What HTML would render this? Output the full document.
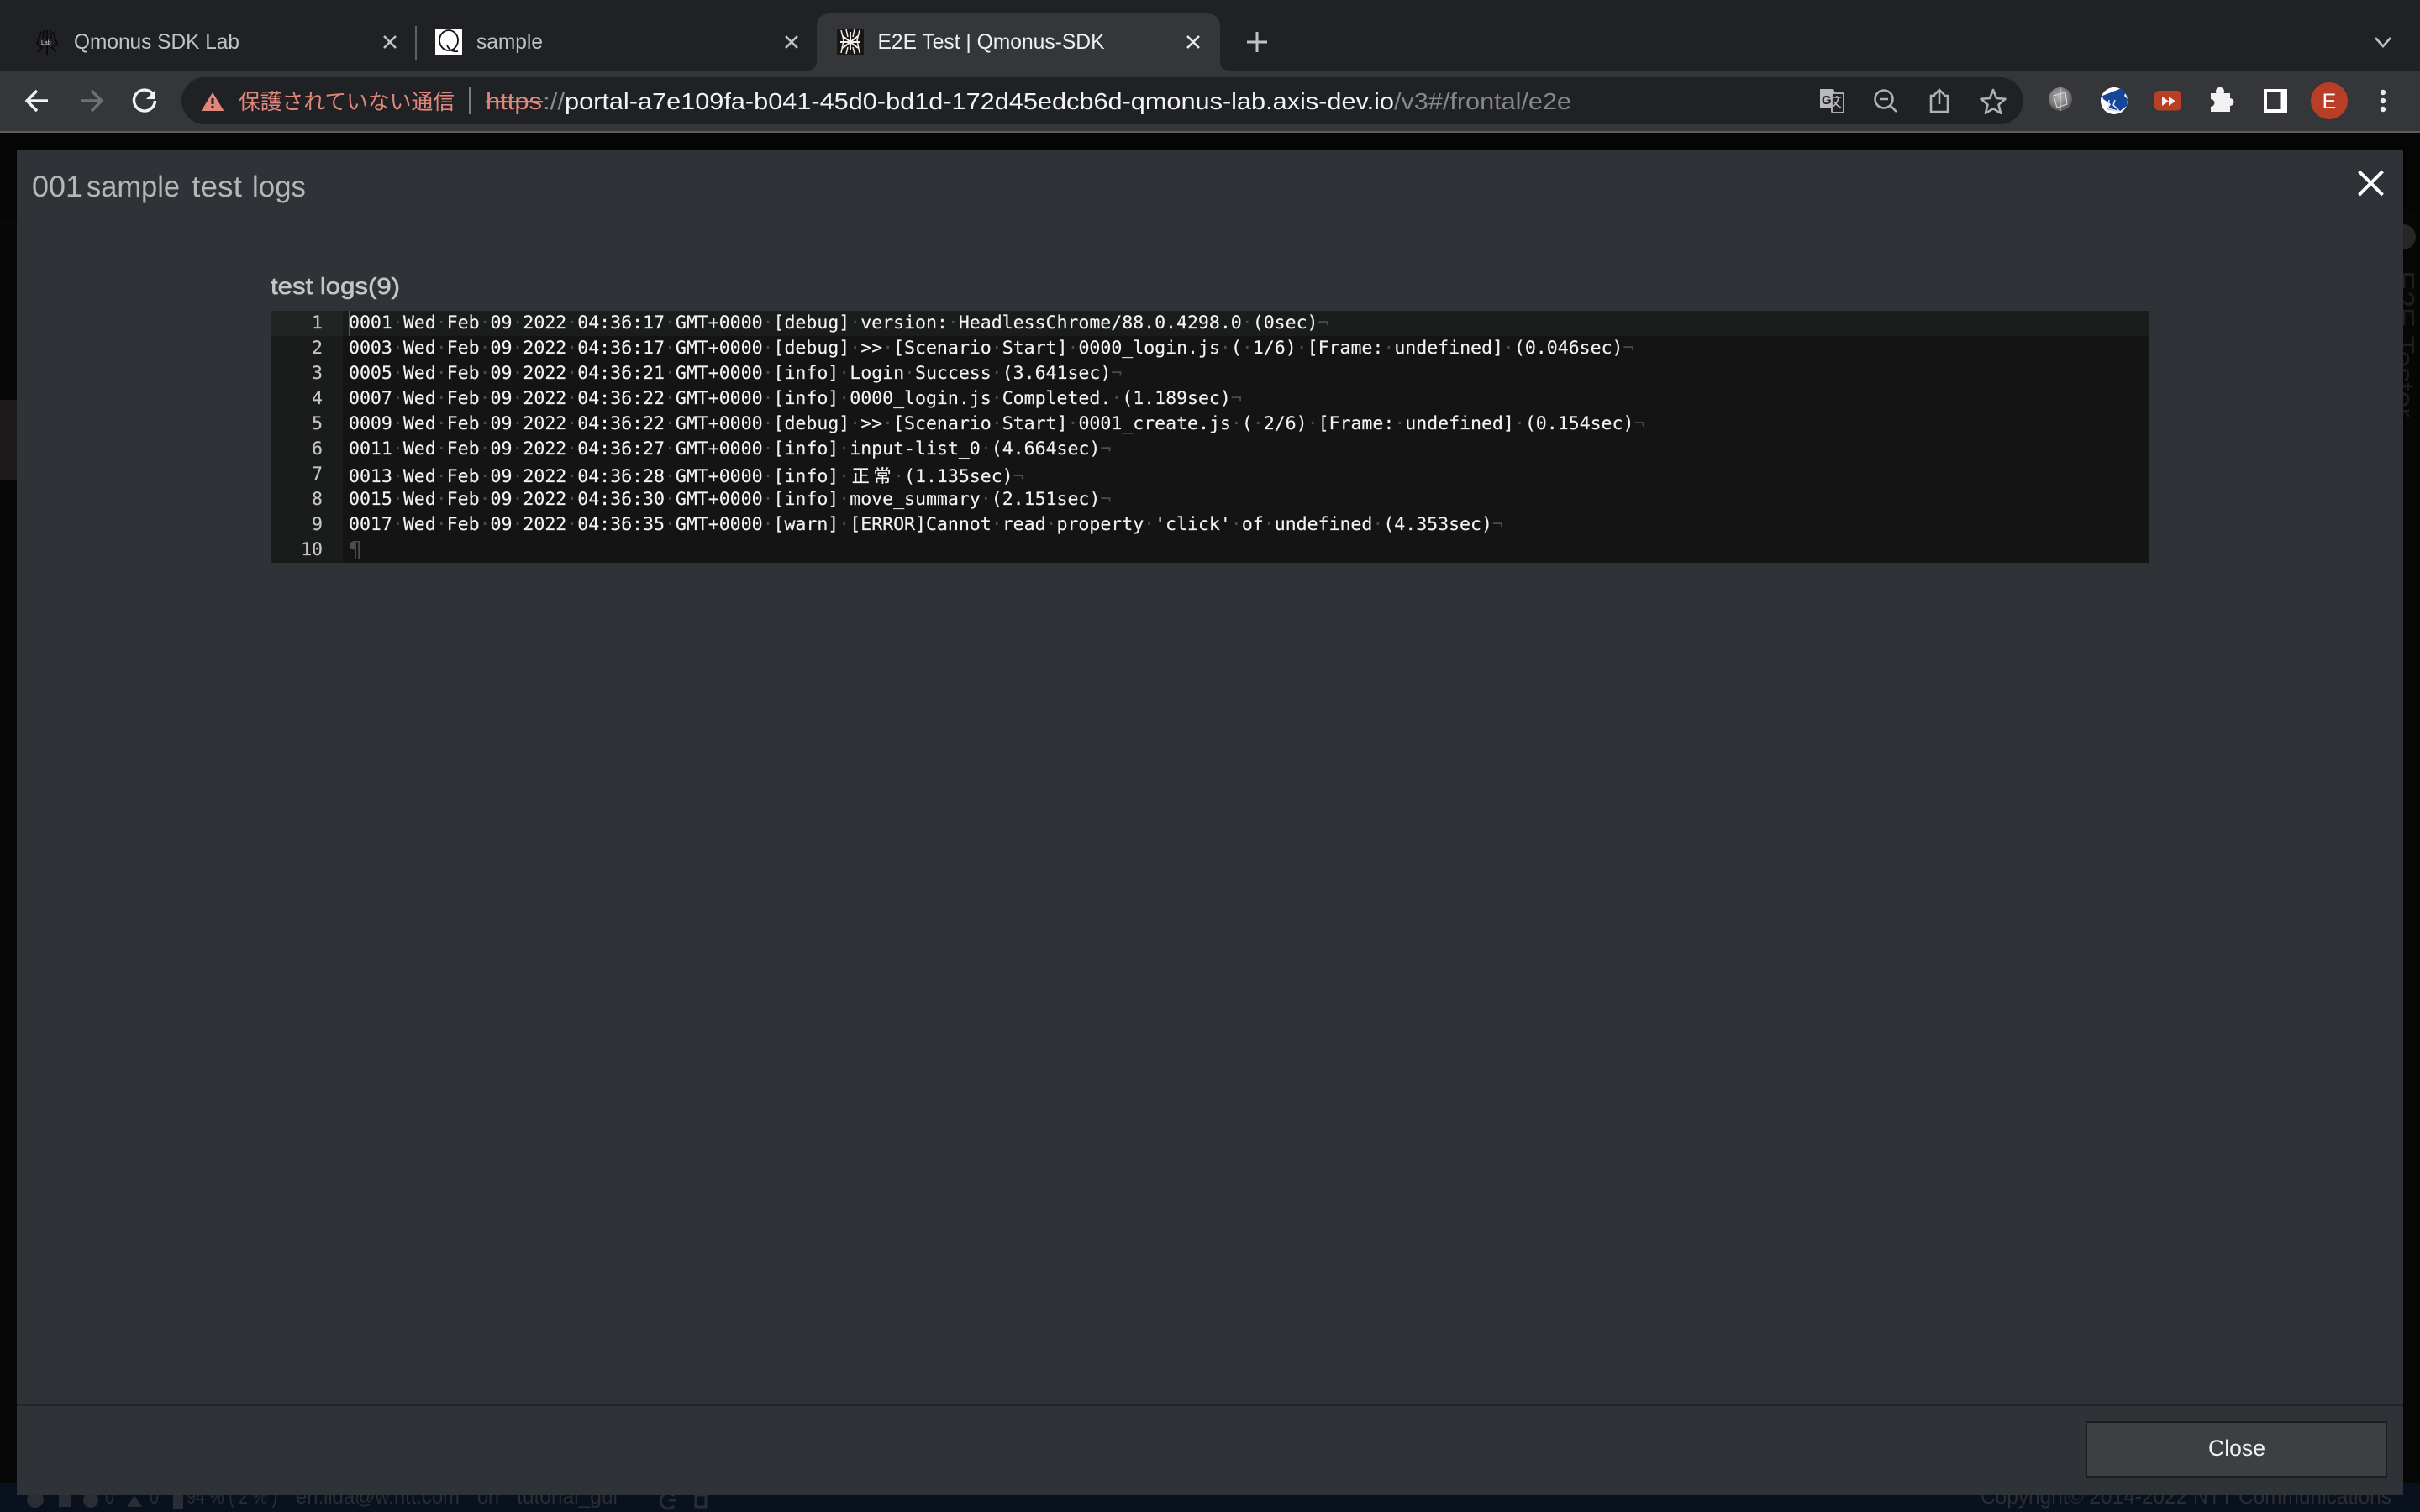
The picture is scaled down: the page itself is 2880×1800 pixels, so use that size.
<!DOCTYPE html>
<html lang="ja">
<head>
<meta charset="utf-8">
<title>E2E Test | Qmonus-SDK</title>
<style>
html,body{margin:0;padding:0;width:2880px;height:1800px;overflow:hidden;background:#050505}
#root{position:relative;width:2880px;height:1800px;overflow:hidden}
svg{position:absolute;left:0;top:0}
text{font-family:"Liberation Sans","Noto Sans CJK JP",sans-serif}
.gut{position:absolute;left:322px;top:370px;width:86px;height:300px;background:#1a1c1c}
.gutA{position:absolute;left:322px;top:370px;width:86px;height:30px;background:#222424}
.ed{position:absolute;left:408px;top:370px;width:2150px;height:300px;background:#141414}
.act{position:absolute;left:408px;top:370px;width:2150px;height:30px;background:#1b1d1d}
.cur{position:absolute;left:415px;top:370px;width:2px;height:30px;background:#5c5e5e}
.l,.n{position:absolute;font:21.6px/30px "DejaVu Sans Mono","Liberation Mono","Noto Sans CJK JP",monospace;white-space:pre;height:30px;color:#f2f2f2;letter-spacing:-0.042px;-webkit-text-stroke:0.15px #f2f2f2}
.l{left:415px}
.n{left:322px;width:62px;text-align:right;color:#c6c6c6;-webkit-text-stroke:0.15px #c6c6c6}
.l i{font-style:normal;color:#4c4d4d;-webkit-text-stroke:0}
.l b{font-weight:normal;display:inline-block;width:25.92px;text-align:center;font-family:"Noto Sans CJK JP",sans-serif;font-size:21px;line-height:30px}
</style>
</head>
<body>
<div id="root">
<svg width="2880" height="1800" viewBox="0 0 2880 1800" xmlns="http://www.w3.org/2000/svg">
  <!-- page behind modal -->
  <rect x="0" y="158" width="2880" height="1607" fill="#050505"/>
  <rect x="0" y="260" width="20" height="1505" fill="#080808"/>
  <rect x="0" y="476" width="20" height="95" fill="#1c1a1a"/>
  <rect x="2860" y="250" width="20" height="1515" fill="#070707"/>
  <circle cx="2860" cy="282" r="15" fill="#262626"/>
  <text transform="translate(2848 322) rotate(90)" font-size="36" fill="#1e1e1e">E2E Tester</text>
  <rect x="0" y="1765" width="2880" height="35" fill="#0a111e"/>
  <g fill="#2a2d33" font-size="25">
    <text x="222" y="1790" textLength="108" lengthAdjust="spacingAndGlyphs">94 % ( 2 % )</text>
    <text x="125" y="1790" textLength="11" lengthAdjust="spacingAndGlyphs">0</text>
    <text x="178" y="1790" textLength="11" lengthAdjust="spacingAndGlyphs">0</text>
    <text x="352" y="1790" textLength="195" lengthAdjust="spacingAndGlyphs">eri.iida@w.ntt.com</text>
    <text x="568" y="1790" textLength="26" lengthAdjust="spacingAndGlyphs">on</text>
    <text x="615" y="1790" textLength="120" lengthAdjust="spacingAndGlyphs">tutorial_gui</text>
    <text x="2357" y="1790" font-size="26" textLength="489" lengthAdjust="spacingAndGlyphs">Copyright© 2014-2022 NTT Communications</text>
    <circle cx="42" cy="1785" r="10"/><rect x="70" y="1780" width="15" height="14"/>
    <circle cx="108" cy="1786" r="9"/><path d="M160 1780l9 14h-18z"/><rect x="206" y="1780" width="12" height="16"/>
    <path d="M802 1781a9 9 0 1 0 0 12M804 1786h-8" fill="none" stroke="#2a2d33" stroke-width="3"/><rect x="828" y="1780" width="12" height="14" fill="none" stroke="#2a2d33" stroke-width="3"/>
  </g>

  <!-- tab strip -->
  <rect x="0" y="0" width="2880" height="84" fill="#202124"/>
  <rect x="0" y="84" width="2880" height="72" fill="#35363a"/>
  <rect x="0" y="156" width="2880" height="2" fill="#5b5c5f"/>

  <path d="M960 84c8 0 12-4 12-12V32c0-10 6-16 16-16h448c10 0 16 6 16 16v40c0 8 4 12 12 12z" fill="#35363a"/>

  <!-- tab 1 -->
  <g stroke="#0c0c0c" stroke-width="2" fill="none"><path d="M56 36v30M49 38l-5 14 7 5M63 38l5 14-7 5M45 62l6-6M67 62l-6-6M52 36l-1 10M60 36l1 10"/></g>
  <text x="49" y="53" font-size="7" fill="#ddd" font-family="Liberation Serif">Lab</text>
  <text x="88" y="58" font-size="25" fill="#c0c2c5" textLength="197" lengthAdjust="spacingAndGlyphs">Qmonus SDK Lab</text>
  <path d="M457 43l14 14M471 43l-14 14" stroke="#bfc1c4" stroke-width="2.6"/>
  <rect x="494" y="31" width="2" height="40" fill="#5f6368"/>
  <!-- tab 2 -->
  <rect x="518" y="34" width="32" height="32" fill="#fff"/>
  <ellipse cx="534" cy="48" rx="11" ry="12" fill="none" stroke="#111" stroke-width="1.800"/>
  <path d="M532 54c3 6 7 8 13 7" fill="none" stroke="#111" stroke-width="1.800"/>
  <text x="567" y="58" font-size="25" fill="#c0c2c5" textLength="79" lengthAdjust="spacingAndGlyphs">sample</text>
  <path d="M935 43l14 14M949 43l-14 14" stroke="#bfc1c4" stroke-width="2.6"/>
  <!-- tab 3 -->
  <rect x="996" y="34" width="32" height="32" fill="#1b1514"/>
  <g stroke="#eee" stroke-width="2" fill="none"><path d="M1003 43l18 14M1021 43l-18 14M1000 50h24M1012 38v22"/><path d="M1001 36l3 12-3 15M1023 36l-3 12 3 15M1007 35l2 9M1017 35l-2 9M1007 64l2-8M1017 64l-2-8" stroke-width="1.500"/></g>
  <text x="1044.5" y="58" font-size="25" fill="#eef0f2" textLength="270" lengthAdjust="spacingAndGlyphs">E2E Test | Qmonus-SDK</text>
  <path d="M1413 43l14 14M1427 43l-14 14" stroke="#e8eaed" stroke-width="2.6"/>
  <path d="M1496 38v24M1484 50h24" stroke="#c0c2c5" stroke-width="3"/>
  <path d="M2827 45l9 10 9-10" fill="none" stroke="#bfc1c4" stroke-width="2.6"/>

  <!-- toolbar nav -->
  <path d="M57 120H33M44 108L32 120L44 132" fill="none" stroke="#f1f2f3" stroke-width="3.4"/>
  <path d="M96 120H120M109 108L121 120L109 132" fill="none" stroke="#707174" stroke-width="3.4"/>
  <path d="M182 112A12.5 12.5 0 1 0 184.500 120" fill="none" stroke="#f1f2f3" stroke-width="3.4"/>
  <path d="M185 107V118H174z" fill="#f1f2f3"/>

  <!-- omnibox -->
  <rect x="216" y="92" width="2192" height="56" rx="28" fill="#202124"/>
  <path d="M253 110l13.500 22h-27z" fill="#e0877c"/>
  <rect x="251.500" y="117" width="3" height="7" fill="#202124"/><rect x="251.500" y="126" width="3" height="3" fill="#202124"/>
  <text x="284" y="130" font-size="25.600" fill="#e0877c" textLength="257" lengthAdjust="spacingAndGlyphs">保護されていない通信</text>
  <rect x="558" y="104" width="2" height="32" fill="#7b7c7f"/>
  <text x="578" y="130" font-size="28" fill="#e0877c" textLength="67" lengthAdjust="spacingAndGlyphs">https</text>
  <rect x="578" y="120" width="68" height="2.200" fill="#e0877c"/>
  <text x="646" y="130" font-size="28" fill="#8a8c8f" textLength="26" lengthAdjust="spacingAndGlyphs">://</text>
  <text x="672" y="130" font-size="28" fill="#f2f3f4" textLength="987" lengthAdjust="spacingAndGlyphs">portal-a7e109fa-b041-45d0-bd1d-172d45edcb6d-qmonus-lab.axis-dev.io</text>
  <text x="1659" y="130" font-size="28" fill="#85878a" textLength="211" lengthAdjust="spacingAndGlyphs">/v3#/frontal/e2e</text>

  <!-- omnibox right icons -->
  <path d="M2166 106h16l2 5v18h-18z" fill="#b9babc"/>
  <rect x="2180" y="111" width="14" height="23" rx="1.500" fill="#202124" stroke="#b9babc" stroke-width="1.800"/>
  <text x="2168" y="124" font-size="15" font-weight="bold" fill="#202124">G</text>
  <path d="M2181 116h10M2186 114v2M2188 116c-1 6-4 9-7 11M2183 121c2 3 5 6 8 7" fill="none" stroke="#b9babc" stroke-width="1.600"/>
  <circle cx="2242" cy="118" r="10.500" fill="none" stroke="#b0b1b3" stroke-width="2.600"/>
  <path d="M2237 118h10M2249 125l8 8" stroke="#b0b1b3" stroke-width="2.600" fill="none"/>
  <path d="M2303 114h-5v19h20v-19h-5M2308 124v-16M2302 113l6-6 6 6" fill="none" stroke="#b0b1b3" stroke-width="2.600"/>
  <path d="M2372 107l4 10 10.500.8-8 6.800 2.600 10.200-9.100-5.600-9.100 5.600 2.600-10.200-8-6.800 10.500-.8z" fill="none" stroke="#b0b1b3" stroke-width="2.600" stroke-linejoin="round"/>

  <!-- extensions -->
  <defs>
    <radialGradient id="gl" cx="45%" cy="40%" r="60%"><stop offset="0" stop-color="#b8b8b8"/><stop offset="0.6" stop-color="#808080"/><stop offset="1" stop-color="#555557"/></radialGradient>
  </defs>
  <circle cx="2452" cy="118" r="14" fill="url(#gl)"/>
  <path d="M2444 114l14-4 2 14-12 4zM2452 104v28" fill="none" stroke="#ddd" stroke-width="1"/>
  <circle cx="2516" cy="120" r="16" fill="#fff"/>
  <path d="M2502 114l23-9 5 5-2 4 4 4-1 8-9 7-14-3 4-6-9-6z" fill="#17459b"/>
  <path d="M2510 119l-1 10 14 4-8-8 2-6" fill="none" stroke="#dfe6f2" stroke-width="1.500"/>
  <rect x="2564" y="108" width="32" height="23.500" rx="5" fill="#b83e24"/>
  <path d="M2573 115l8 5.500-8 5.500zM2581 115l8 5.500-8 5.500z" fill="#f6f1ee"/>
  <path d="M2631 111h6.500a5 5 0 1 1 9 0h7.500v6a4.500 4.500 0 1 1 0 9v7h-23v-6a4.500 4.500 0 0 0 0-9z" fill="#f1f1f1"/>
  <rect x="2694" y="106" width="28" height="28" fill="#fff"/>
  <rect x="2698" y="110" width="15.500" height="20" fill="#35363a"/>
  <circle cx="2772" cy="120" r="22" fill="#b83e26"/>
  <text x="2772" y="129" font-size="25" fill="#fff" text-anchor="middle">E</text>
  <circle cx="2836" cy="110" r="3.200" fill="#e8eaed"/><circle cx="2836" cy="120" r="3.200" fill="#e8eaed"/><circle cx="2836" cy="130" r="3.200" fill="#e8eaed"/>

  <!-- modal -->
  <rect x="20" y="178" width="2840" height="1602" fill="#2f3236"/>
  <g font-size="35" fill="#b4b6b8">
    <text x="38" y="234" textLength="60" lengthAdjust="spacingAndGlyphs">001</text>
    <text x="103" y="234" textLength="111" lengthAdjust="spacingAndGlyphs">sample</text>
    <text x="228" y="234" textLength="60" lengthAdjust="spacingAndGlyphs">test</text>
    <text x="300" y="234" textLength="64" lengthAdjust="spacingAndGlyphs">logs</text>
  </g>
  <path d="M2807.500 204l28 28M2835.500 204l-28 28" stroke="#fff" stroke-width="4"/>
  <text x="322" y="350" font-size="28" fill="#c4c5c6" stroke="#c4c5c6" stroke-width="0.600" textLength="154" lengthAdjust="spacingAndGlyphs">test logs(9)</text>
  <rect x="20" y="1672" width="2840" height="2" fill="#222427"/>
  <rect x="2483" y="1693" width="357" height="65" fill="#3d4043" stroke="#1b1d1f" stroke-width="2"/>
  <text x="2628" y="1733" font-size="27" fill="#eff0f1" textLength="68" lengthAdjust="spacingAndGlyphs">Close</text>
</svg>

<div class="gut"></div><div class="gutA"></div><div class="ed"></div><div class="act"></div><div class="cur"></div>

<div class="n" style="top:370px">1</div>
<div class="n" style="top:400px">2</div>
<div class="n" style="top:430px">3</div>
<div class="n" style="top:460px">4</div>
<div class="n" style="top:490px">5</div>
<div class="n" style="top:520px">6</div>
<div class="n" style="top:550px">7</div>
<div class="n" style="top:580px">8</div>
<div class="n" style="top:610px">9</div>
<div class="n" style="top:640px">10</div>

<div class="l" style="top:370px">0001<i>·</i>Wed<i>·</i>Feb<i>·</i>09<i>·</i>2022<i>·</i>04:36:17<i>·</i>GMT+0000<i>·</i>[debug]<i>·</i>version:<i>·</i>HeadlessChrome/88.0.4298.0<i>·</i>(0sec)<i>¬</i></div>
<div class="l" style="top:400px">0003<i>·</i>Wed<i>·</i>Feb<i>·</i>09<i>·</i>2022<i>·</i>04:36:17<i>·</i>GMT+0000<i>·</i>[debug]<i>·</i>&gt;&gt;<i>·</i>[Scenario<i>·</i>Start]<i>·</i>0000_login.js<i>·</i>(<i>·</i>1/6)<i>·</i>[Frame:<i>·</i>undefined]<i>·</i>(0.046sec)<i>¬</i></div>
<div class="l" style="top:430px">0005<i>·</i>Wed<i>·</i>Feb<i>·</i>09<i>·</i>2022<i>·</i>04:36:21<i>·</i>GMT+0000<i>·</i>[info]<i>·</i>Login<i>·</i>Success<i>·</i>(3.641sec)<i>¬</i></div>
<div class="l" style="top:460px">0007<i>·</i>Wed<i>·</i>Feb<i>·</i>09<i>·</i>2022<i>·</i>04:36:22<i>·</i>GMT+0000<i>·</i>[info]<i>·</i>0000_login.js<i>·</i>Completed.<i>·</i>(1.189sec)<i>¬</i></div>
<div class="l" style="top:490px">0009<i>·</i>Wed<i>·</i>Feb<i>·</i>09<i>·</i>2022<i>·</i>04:36:22<i>·</i>GMT+0000<i>·</i>[debug]<i>·</i>&gt;&gt;<i>·</i>[Scenario<i>·</i>Start]<i>·</i>0001_create.js<i>·</i>(<i>·</i>2/6)<i>·</i>[Frame:<i>·</i>undefined]<i>·</i>(0.154sec)<i>¬</i></div>
<div class="l" style="top:520px">0011<i>·</i>Wed<i>·</i>Feb<i>·</i>09<i>·</i>2022<i>·</i>04:36:27<i>·</i>GMT+0000<i>·</i>[info]<i>·</i>input-list_0<i>·</i>(4.664sec)<i>¬</i></div>
<div class="l" style="top:551px">0013<i>·</i>Wed<i>·</i>Feb<i>·</i>09<i>·</i>2022<i>·</i>04:36:28<i>·</i>GMT+0000<i>·</i>[info]<i>·</i><b>正</b><b>常</b><i>·</i>(1.135sec)<i>¬</i></div>
<div class="l" style="top:580px">0015<i>·</i>Wed<i>·</i>Feb<i>·</i>09<i>·</i>2022<i>·</i>04:36:30<i>·</i>GMT+0000<i>·</i>[info]<i>·</i>move_summary<i>·</i>(2.151sec)<i>¬</i></div>
<div class="l" style="top:610px">0017<i>·</i>Wed<i>·</i>Feb<i>·</i>09<i>·</i>2022<i>·</i>04:36:35<i>·</i>GMT+0000<i>·</i>[warn]<i>·</i>[ERROR]Cannot<i>·</i>read<i>·</i>property<i>·</i>'click'<i>·</i>of<i>·</i>undefined<i>·</i>(4.353sec)<i>¬</i></div>
<div class="l" style="top:640px"><i style="font-size:26px">¶</i></div>
</div>
</body>
</html>
